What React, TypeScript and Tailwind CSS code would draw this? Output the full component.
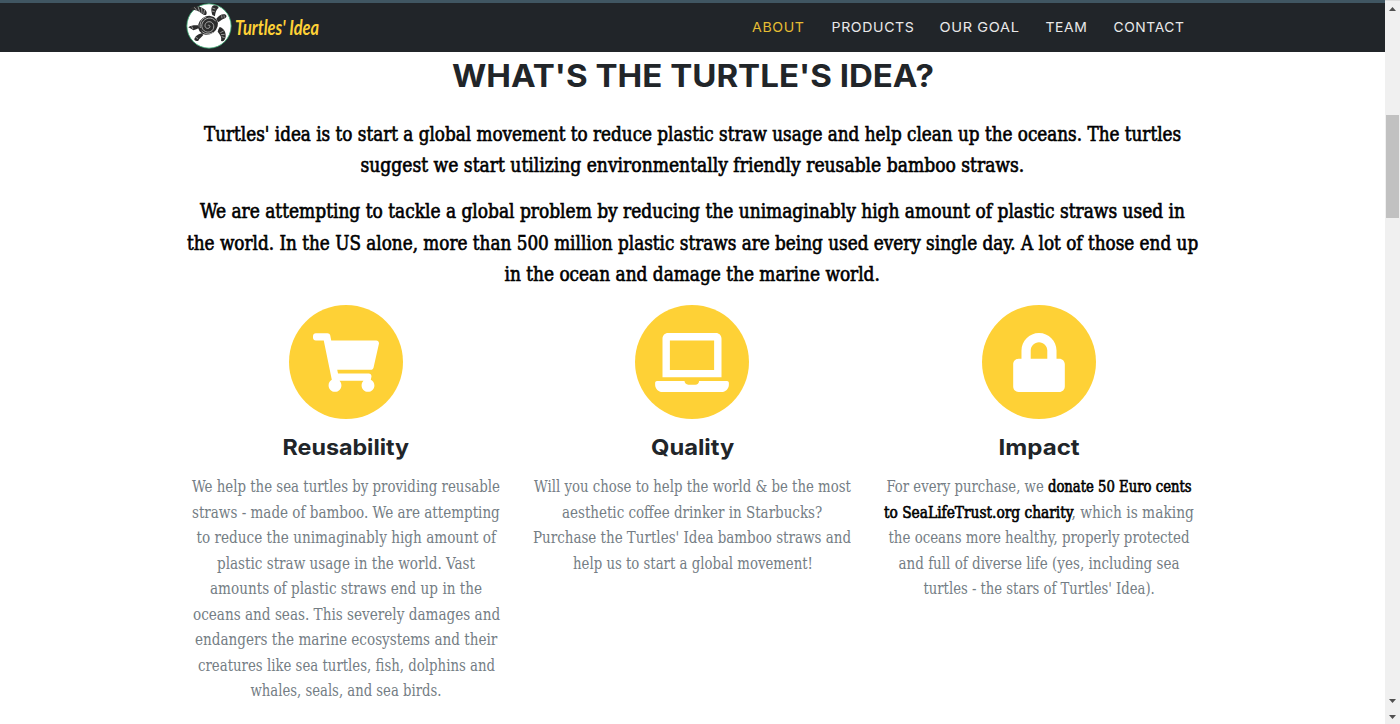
import { useLayoutEffect, useRef, useState, type ReactNode } from "react";
import { FaShoppingCart, FaLaptop, FaLock } from "react-icons/fa";

/** A single line of text condensed or widened to a fixed measure. */
function FitText({ width, children, className = "" }: { width: number; children: ReactNode; className?: string }) {
  const ref = useRef<HTMLSpanElement>(null);
  const [scale, setScale] = useState(1);
  useLayoutEffect(() => {
    if (ref.current) setScale(width / ref.current.offsetWidth);
  }, [width]);
  return (
    <span className={`flex justify-center whitespace-nowrap ${className}`} style={{ width }}>
      <span ref={ref} className="block shrink-0" style={{ transform: `scaleX(${scale})` }}>
        {children}
      </span>
    </span>
  );
}

const nav: [string, number][] = [
  ["ABOUT", 53],
  ["PRODUCTS", 83],
  ["OUR GOAL", 80],
  ["TEAM", 42],
  ["CONTACT", 71],
];

const intro: [string, number][][] = [
  [
    ["Turtles' idea is to start a global movement to reduce plastic straw usage and help clean up the oceans. The turtles", 977],
    ["suggest we start utilizing environmentally friendly reusable bamboo straws.", 664],
  ],
  [
    ["We are attempting to tackle a global problem by reducing the unimaginably high amount of plastic straws used in", 985],
    ["the world. In the US alone, more than 500 million plastic straws are being used every single day. A lot of those end up", 1011],
    ["in the ocean and damage the marine world.", 375],
  ],
];

const strong = "text-black [-webkit-text-stroke:0.6px_black]";

const features: { title: string; titleWidth: number; icon: ReactNode; lines: [ReactNode, number][] }[] = [
  {
    title: "Reusability",
    titleWidth: 127,
    icon: <FaShoppingCart className="h-[59px] w-[66px]" />,
    lines: [
      ["We help the sea turtles by providing reusable", 308],
      ["straws - made of bamboo. We are attempting", 308],
      ["to reduce the unimaginably high amount of", 299],
      ["plastic straw usage in the world. Vast", 258],
      ["amounts of plastic straws end up in the", 272],
      ["oceans and seas. This severely damages and", 307],
      ["endangers the marine ecosystems and their", 302],
      ["creatures like sea turtles, fish, dolphins and", 297],
      ["whales, seals, and sea birds.", 191],
    ],
  },
  {
    title: "Quality",
    titleWidth: 83,
    icon: <FaLaptop className="h-[59px] w-[74px]" />,
    lines: [
      ["Will you chose to help the world & be the most", 317],
      ["aesthetic coffee drinker in Starbucks?", 260],
      ["Purchase the Turtles' Idea bamboo straws and", 318],
      ["help us to start a global movement!", 240],
    ],
  },
  {
    title: "Impact",
    titleWidth: 81,
    icon: <FaLock className="h-[59px] w-[52px]" />,
    lines: [
      [<>For every purchase, we <b className={`font-normal ${strong}`}>donate 50 Euro cents</b></>, 305],
      [<><b className={`font-normal ${strong}`}>to SeaLifeTrust.org charity</b>, which is making</>, 310],
      ["the oceans more healthy, properly protected", 301],
      ["and full of diverse life (yes, including sea", 281],
      ["turtles - the stars of Turtles' Idea).", 231],
    ],
  },
];

function TurtleLogo() {
  return (
    <svg viewBox="0 0 138 138" className="h-[46px] w-[46px] shrink-0">
      <circle cx="69" cy="69" r="66.5" fill="#fff" stroke="#35a46c" strokeWidth="2.5" />
      <g fill="#2c2c2c">
        <path d="M48 32C38 24 26 20 11 19C18 9 34 7 48 14C59 19 66 28 60 36C55 36 51 34 48 32Z" />
        <path d="M101 72C114 76 120 88 119 101C117 112 111 118 105 113C108 101 101 94 95 86C96 81 98 76 101 72Z" />
        <path d="M79 36C75 22 74 10 84 7C91 6 97 10 98 15C91 18 88 30 87 40Z" />
        <path d="M36 67C25 66 15 67 7 73C13 77 18 78 22 82C28 80 34 78 39 75Z" />
        <path d="M47 91C34 94 26 101 25 110C30 115 35 115 37 113C39 107 47 103 52 96Z" />
        <path d="M91 47C98 38 107 32 117 34C123 37 123 43 117 46C109 48 103 54 96 58Z" />
        <ellipse cx="66" cy="67" rx="31" ry="27" transform="rotate(-35 66 67)" />
      </g>
      <g fill="none" stroke="#c8c8c8" strokeWidth="2.4">
        <path d="M66 68c2-4 8 0 5 5c-4 6-14 3-14-5c0-11 14-16 22-8c9 9 3 25-9 27c-16 3-27-13-21-27c7-17 31-20 40-5" />
        <path d="M43 75C40 61 46 47 61 42M47 84c8 10 24 11 34 4" />
      </g>
      <g stroke="#ddd" strokeWidth="1.8" fill="none">
        <path d="M25 13l8 10M36 11l5 15M47 15l1 16M56 20l-3 13M113 84l-10 5M116 94l-11 1M116 104l-9-3M79 15l9 3M78 24l8 2M17 70l4 8M28 102l8 5M107 37l1 9M114 37l1 7" />
      </g>
    </svg>
  );
}

function Arrow({ up = false }: { up?: boolean }) {
  return (
    <svg viewBox="0 0 7 4" className="h-1 w-[7px] shrink-0">
      <path d={up ? "M0 4h7L3.5 0Z" : "M0 0h7L3.5 4Z"} fill="#505050" />
    </svg>
  );
}

export default function App() {
  return (
    <div className="flex h-[724px] w-[1400px] overflow-hidden bg-white">
      <div className="flex w-[1385px] flex-col">
        <header className="flex h-[52px] items-start justify-between border-t-[3px] border-[#405662] bg-[#212529] pr-[200px] pl-[186px]">
          <a className="flex items-center gap-[3px]">
            <TurtleLogo />
            <FitText width={84} className="pt-px font-['Lato'] text-[20px] leading-7 font-bold text-[#fed136] italic">
              Turtles' Idea
            </FitText>
          </a>
          <nav className="flex gap-[26px] pt-[14px] font-['Inter'] text-[13.6px] leading-5 tracking-[0.6px] text-[#e9e9e9]">
            {nav.map(([label, width], i) => (
              <FitText key={label} width={width} className={i === 0 ? "text-[#e6bd33]" : ""}>
                {label}
              </FitText>
            ))}
          </nav>
        </header>

        <main className="flex flex-col items-center">
          <h2 className="pt-1 font-['Inter'] text-[31px] leading-10 font-bold text-[#212529]">
            <FitText width={482}>WHAT'S THE TURTLE'S IDEA?</FitText>
          </h2>
          <div className="flex flex-col gap-[15px] pt-[23px] font-['DejaVu_Serif_Condensed','DejaVu_Serif',serif] text-[19.5px] leading-[31.2px]">
            {intro.map((lines, i) => (
              <p key={i} className={`flex flex-col items-center ${strong}`}>
                {lines.map(([text, width]) => (
                  <FitText key={text} width={width}>{text}</FitText>
                ))}
              </p>
            ))}
          </div>
          <section className="grid w-[1039px] grid-cols-3 pt-[15px]">
            {features.map((f) => (
              <article key={f.title} className="flex flex-col items-center">
                <div className="flex h-[114px] w-[114px] items-center justify-center rounded-full bg-[#fed136] text-white">
                  {f.icon}
                </div>
                <h4 className="pt-3 font-['Inter'] text-[22px] leading-8 font-bold text-[#212529]">
                  <FitText width={f.titleWidth}>{f.title}</FitText>
                </h4>
                <div className="flex flex-col items-center pt-[11px] font-['DejaVu_Serif_Condensed','DejaVu_Serif',serif] text-[16px] leading-[25.5px] text-[#747d84]">
                  {f.lines.map(([text, width], i) => (
                    <FitText key={i} width={width}>{text}</FitText>
                  ))}
                </div>
              </article>
            ))}
          </section>
        </main>
      </div>

      <aside className="flex w-[15px] flex-col items-center border-t border-[#dcdcdc] bg-[#f0f0f0]">
        <div className="flex h-[114px] pt-[6px]">
          <Arrow up />
        </div>
        <div className="h-[103px] w-[13px] bg-[#c1c1c1]" />
        <div className="mt-auto flex flex-col gap-3 pb-[5px]">
          <Arrow />
          <Arrow />
        </div>
      </aside>
    </div>
  );
}
